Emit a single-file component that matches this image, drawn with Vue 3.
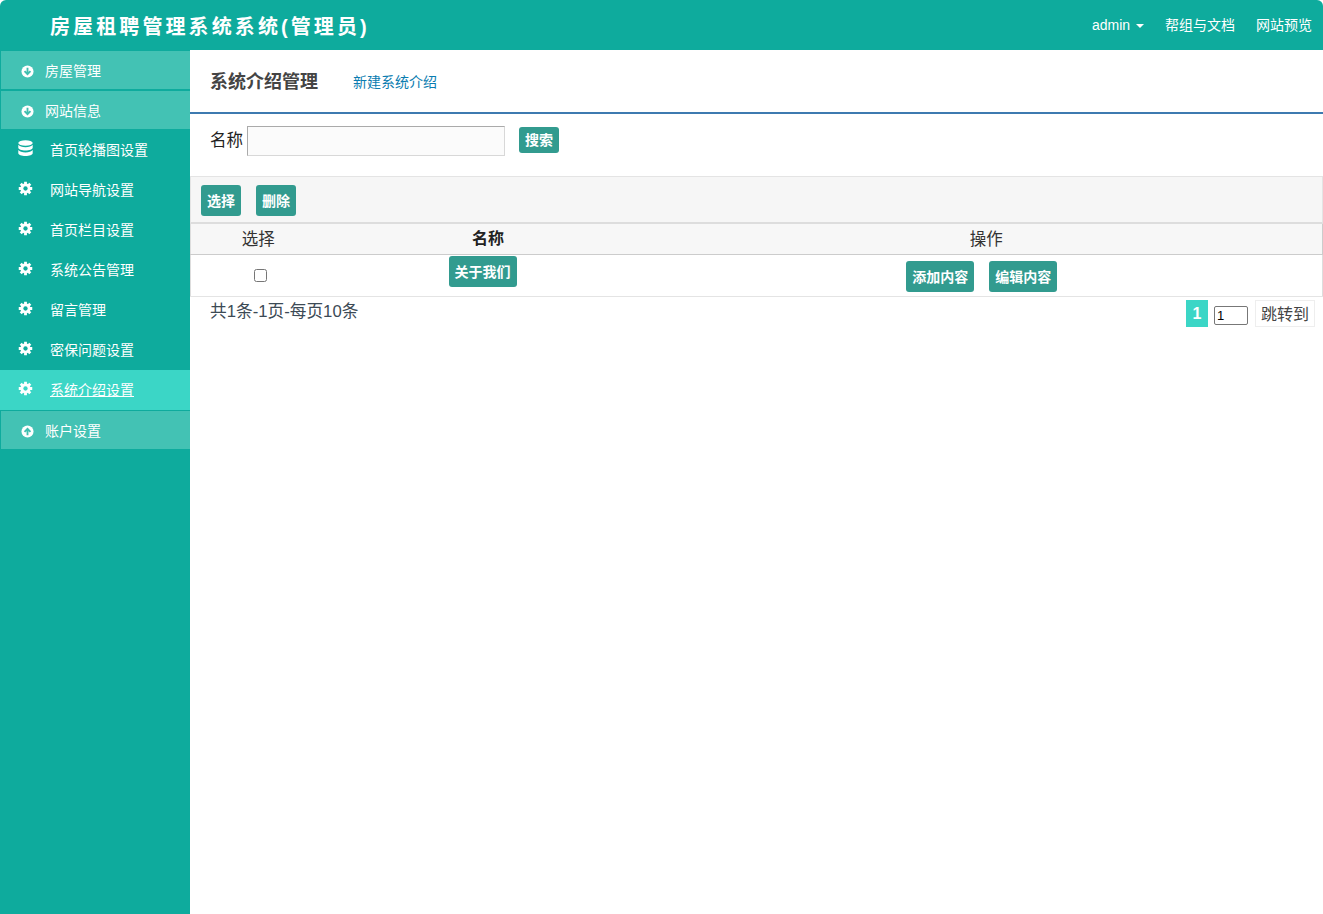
<template>
  <div class="page">
    <header class="topbar">
      <div class="brand">房屋租聘管理系统系统(管理员)</div>
      <nav class="top-links">
        <a class="admin">admin <i class="caret"></i></a>
        <a>帮组与文档</a>
        <a>网站预览</a>
      </nav>
    </header>

    <div class="body">
      <aside class="sidebar">
        <div class="section first">
          <svg class="circle-icon" viewBox="0 0 14 14"><circle cx="7" cy="7" r="6.5" fill="#fff"/><path d="M7 3v7M3.800 6.600 7 9.800l3.200-3.200" fill="none" stroke="#3fbfb0" stroke-width="2"/></svg>
          <span>房屋管理</span>
        </div>
        <div class="section second">
          <svg class="circle-icon" viewBox="0 0 14 14"><circle cx="7" cy="7" r="6.5" fill="#fff"/><path d="M7 3v7M3.800 6.600 7 9.800l3.200-3.200" fill="none" stroke="#3fbfb0" stroke-width="2"/></svg>
          <span>网站信息</span>
        </div>

        <a v-for="item in menu" :key="item.label" class="item" :class="{ active: item.active }">
          <svg v-if="item.icon === 'db'" class="item-icon db" viewBox="0 0 15 17" fill="#fff">
            <ellipse cx="7.500" cy="3" rx="7.200" ry="2.800"/>
            <path d="M.3 4.800c1.200 1.700 3.800 2.400 7.200 2.400s6-.7 7.200-2.400v2.900c0 1.500-3.200 2.700-7.200 2.700S.3 9.200.3 7.700z"/>
            <path d="M.3 10c1.200 1.700 3.800 2.400 7.200 2.400s6-.7 7.200-2.400v3.300c0 1.500-3.200 2.700-7.200 2.700S.3 14.800.3 13.300z"/>
          </svg>
          <svg v-else class="item-icon" viewBox="0 0 16 16">
            <path d="M8 .8v14.400M.8 8h14.400M2.900 2.900l10.200 10.200M13.100 2.900 2.900 13.100" stroke="#fff" stroke-width="3"/>
            <circle cx="8" cy="8" r="5.400" fill="#fff"/>
            <circle cx="8" cy="8" r="2.300" :fill="item.active ? '#3bd6c6' : '#0fac9e'"/>
          </svg>
          <span>{{ item.label }}</span>
        </a>

        <div class="section account">
          <svg class="circle-icon" viewBox="0 0 14 14"><circle cx="7" cy="7" r="6.500" fill="#fff"/><path d="M7 11V4M3.800 7.400 7 4.200l3.200 3.200" fill="none" stroke="#3fbfb0" stroke-width="2"/></svg>
          <span>账户设置</span>
        </div>
      </aside>

      <main class="content">
        <div class="title-bar">
          <h1>系统介绍管理</h1>
          <a class="new-link">新建系统介绍</a>
        </div>

        <div class="search-row">
          <label>名称</label>
          <input class="search-input" type="text" />
          <button class="btn search-btn">搜索</button>
        </div>

        <div class="toolbar">
          <button class="btn">选择</button>
          <button class="btn">删除</button>
        </div>

        <table class="grid">
          <colgroup>
            <col class="col-check" />
            <col class="col-name" />
            <col />
          </colgroup>
          <thead>
            <tr>
              <th class="plain">选择</th>
              <th class="name-head">名称</th>
              <th class="plain">操作</th>
            </tr>
          </thead>
          <tbody>
            <tr>
              <td class="check-cell"><input type="checkbox" /></td>
              <td class="name-cell"><button class="btn">关于我们</button></td>
              <td class="ops-cell">
                <div class="ops">
                  <button class="btn">添加内容</button>
                  <button class="btn">编辑内容</button>
                </div>
              </td>
            </tr>
          </tbody>
        </table>

        <div class="pager">
          <span class="count">共1条-1页-每页10条</span>
          <div class="pages">
            <span class="current">1</span>
            <input class="page-input" type="text" value="1" />
            <a class="jump">跳转到</a>
          </div>
        </div>
      </main>
    </div>
  </div>
</template>

<script setup>
const menu = [
  { label: '首页轮播图设置', icon: 'db' },
  { label: '网站导航设置', icon: 'gear' },
  { label: '首页栏目设置', icon: 'gear' },
  { label: '系统公告管理', icon: 'gear' },
  { label: '留言管理', icon: 'gear' },
  { label: '密保问题设置', icon: 'gear' },
  { label: '系统介绍设置', icon: 'gear', active: true },
]
</script>

<style>
html, body { margin: 0; background: #fff; }
</style>

<style scoped>
.page {
  width: 1323px;
  height: 914px;
  overflow: hidden;
  display: flex;
  flex-direction: column;
  font-family: "Liberation Sans", "Noto Sans CJK SC", sans-serif;
  font-size: 14px;
  color: #333;
}

.topbar {
  height: 50px;
  flex: none;
  background: #0eab9d;
  border-radius: 6px 6px 0 0;
  display: flex;
  justify-content: space-between;
  align-items: center;
  color: #fff;
}
.brand {
  margin-left: 50px;
  font-size: 20px;
  font-weight: 700;
  letter-spacing: 3.100px;
}
.top-links { display: flex; align-items: center; gap: 21px; margin: -1px 11px 0 0; line-height: 20px; }
.admin { margin-top: 1px; }
.caret {
  display: inline-block;
  margin-left: 2px;
  vertical-align: middle;
  border-top: 4px solid #fff;
  border-left: 4px solid transparent;
  border-right: 4px solid transparent;
}

.body { flex: 1; display: flex; min-height: 0; }

.sidebar {
  width: 190px;
  flex: none;
  background: #0eab9d;
  color: #fff;
}
.section {
  height: 38px;
  margin: 2px 0 0 1px;
  background: #43c2b4;
  display: flex;
  align-items: center;
  padding-left: 20px;
  gap: 11px;
}
.section.first { margin-top: 1px; }
.section.second { margin-bottom: 1px; }
.section.account { margin-top: 1px; }
.circle-icon { width: 13px; height: 13px; margin-top: 2px; }

.item {
  height: 40px;
  display: flex;
  align-items: center;
  padding-left: 18px;
  gap: 17px;
}
.item span { margin-top: -2px; }
.item-icon { width: 15px; height: 15px; flex: none; margin-top: -3px; }
.item-icon.db { height: 17px; }
.item.active { background: #3bd6c6; }
.item.active span { text-decoration: underline; }

.content { flex: 1; min-width: 0; }

.title-bar {
  height: 62px;
  border-bottom: 2px solid #3d7ab0;
  display: flex;
  align-items: center;
  padding-left: 20px;
}
.title-bar h1 {
  margin: -2px 0 0;
  font-size: 18px;
  font-weight: 700;
  color: #444;
}
.new-link { margin-left: 35px; color: #0a7cb0; font-size: 14px; }

.search-row {
  height: 62px;
  padding: 12px 0 0 20px;
  box-sizing: border-box;
  display: flex;
  align-items: flex-start;
  font-size: 16.500px;
  color: #222;
}
.search-row label { margin-top: 1px; }
.search-input {
  width: 258px;
  height: 30px;
  box-sizing: border-box;
  margin-left: 4px;
  border: 1px solid #d8d8d8;
  border-top-color: #aaa;
  border-left-color: #aaa;
  background: #fbfbfb;
}

.btn {
  height: 31px;
  padding: 0 6px 2px;
  border: none;
  border-radius: 3px;
  background: #329b8f;
  color: #fff;
  font-family: inherit;
  font-size: 14px;
  font-weight: 700;
}
.search-btn { height: 26px; margin: 1px 0 0 14px; }

.toolbar {
  height: 48px;
  box-sizing: border-box;
  background: #f6f6f6;
  border: 1px solid #e4e4e4;
  border-bottom: 2px solid #ddd;
  padding: 8px 0 0 10px;
  display: flex;
  align-items: flex-start;
  gap: 15px;
}

.grid {
  width: 100%;
  table-layout: fixed;
  border-collapse: collapse;
}
.col-check { width: 135px; }
.col-name { width: 325px; }
.grid th {
  height: 30px;
  padding: 0;
  background: #f7f7f7;
  border-bottom: 1px solid #ccc;
  font-size: 16px;
  font-weight: 700;
  line-height: 22px;
  color: #222;
}
.grid th.name-head { vertical-align: top; line-height: 29px; }
.grid th.plain { font-size: 16.500px; font-weight: 400; color: #333; }
.grid thead tr th:first-child { border-left: 1px solid #ddd; }
.grid thead tr th:last-child { border-right: 1px solid #ccc; }
.grid td {
  height: 41px;
  padding: 0;
  border-bottom: 1px solid #e4e4e4;
  text-align: center;
}
.grid td:first-child { border-left: 1px solid #ddd; }
.grid td:last-child { border-right: 1px solid #ddd; }
.check-cell input { margin: 3px 0 0 4px; width: 13px; height: 13px; }
.name-cell { vertical-align: top; }
.name-cell .btn { display: block; margin: 1px 0 0 123px; }
.ops-cell { vertical-align: top; }
.ops { display: flex; justify-content: center; gap: 15px; padding: 6px 9px 0 0; }

.pager {
  display: flex;
  justify-content: space-between;
  align-items: flex-start;
  padding: 3px 8px 0 20px;
}
.count { font-size: 16.700px; line-height: 24px; color: #3c4a55; }
.pages { display: flex; align-items: flex-start; }
.current {
  width: 22px;
  height: 27px;
  background: #3bd6c6;
  color: #fff;
  font-size: 16px;
  font-weight: 700;
  line-height: 27px;
  text-align: center;
}
.page-input {
  width: 34px;
  height: 19px;
  margin: 6px 7px 0 6px;
  padding: 0 2px;
  box-sizing: border-box;
  border: 1px solid #777;
  border-radius: 2px;
  font-size: 13px;
}
.jump {
  height: 27px;
  box-sizing: border-box;
  padding: 0 5px;
  border: 1px solid #eee;
  font-size: 16px;
  line-height: 27px;
  color: #444;
}
</style>
